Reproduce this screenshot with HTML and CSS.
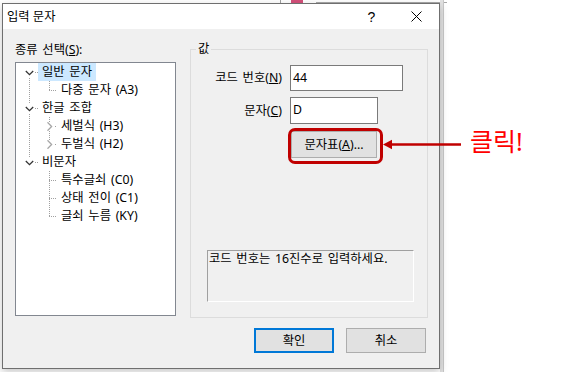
FILE: index.html
```html
<!DOCTYPE html>
<html lang="ko">
<head>
<meta charset="utf-8">
<title>입력 문자</title>
<link rel="stylesheet" href="styles.css">
</head>
<body>
<div class="desk">
  <div class="bg-line-v"></div>
  <div class="bg-pink"></div>
  <div class="bg-window"></div>
  <div class="bg-strip"></div>

  <div class="dialog">
    <div class="titlebar">
      <span class="title">입력 문자</span>
      <span class="tb-btn help">?</span>
      <span class="tb-btn close">
        <svg width="11" height="11" viewBox="0 0 11 11"><path d="M0.5 0.5 L10.5 10.5 M10.5 0.5 L0.5 10.5" stroke="#000" stroke-width="1" fill="none"/></svg>
      </span>
    </div>
    <div class="body">
      <div class="left">
        <div class="lbl">종류 선택(<u>S</u>):</div>
        <div class="tree">
          <svg class="tree-lines" width="159" height="252" viewBox="0 0 159 252">
            <g stroke="#a0a0a0" stroke-width="1" stroke-dasharray="1 1" fill="none">
              <path d="M13.5 9 V99"/>
              <path d="M13 9.5 H22 M13 45.5 H22 M13 99.5 H22"/>
              <path d="M33.5 18 V27 M33.5 54 V81 M33.5 108 V153"/>
              <path d="M33 27.5 H41 M33 63.5 H41 M33 81.5 H41 M33 117.5 H41 M33 135.5 H41 M33 153.5 H41"/>
            </g>
          </svg>
          <div class="row l0 sel"><span class="exp"><svg width="9" height="9" viewBox="0 0 9 9"><path d="M0.8 3 L4.5 6.6 L8.2 3" stroke="#333" stroke-width="1.3" fill="none"/></svg></span><span class="txt">일반 문자</span></div>
          <div class="row l1"><span class="gap"></span><span class="txt">다중 문자 (A3)</span></div>
          <div class="row l0"><span class="exp"><svg width="9" height="9" viewBox="0 0 9 9"><path d="M0.8 3 L4.5 6.6 L8.2 3" stroke="#333" stroke-width="1.3" fill="none"/></svg></span><span class="txt">한글 조합</span></div>
          <div class="row l1"><span class="exp"><svg width="9" height="9" viewBox="0 0 9 9"><path d="M2.5 0.3 L6.6 4.5 L2.5 8.7" stroke="#a6a6a6" stroke-width="1.3" fill="none"/></svg></span><span class="txt">세벌식 (H3)</span></div>
          <div class="row l1"><span class="exp"><svg width="9" height="9" viewBox="0 0 9 9"><path d="M2.5 0.3 L6.6 4.5 L2.5 8.7" stroke="#a6a6a6" stroke-width="1.3" fill="none"/></svg></span><span class="txt">두벌식 (H2)</span></div>
          <div class="row l0"><span class="exp"><svg width="9" height="9" viewBox="0 0 9 9"><path d="M0.8 3 L4.5 6.6 L8.2 3" stroke="#333" stroke-width="1.3" fill="none"/></svg></span><span class="txt">비문자</span></div>
          <div class="row l1"><span class="gap"></span><span class="txt">특수글쇠 (C0)</span></div>
          <div class="row l1"><span class="gap"></span><span class="txt">상태 전이 (C1)</span></div>
          <div class="row l1"><span class="gap"></span><span class="txt">글쇠 누름 (KY)</span></div>
        </div>
      </div>

      <div class="group">
        <span class="group-title">값</span>
        <div class="form">
          <label class="flabel">코드 번호(<u>N</u>)</label>
          <div class="input w1">44</div>
          <label class="flabel">문자(<u>C</u>)</label>
          <div class="input w2">D</div>
          <button class="btn charmap">문자표(<u>A</u>)...</button>
        </div>
        <div class="desc">코드 번호는 16진수로 입력하세요.</div>
      </div>

      <div class="actions">
        <button class="btn act ok">확인</button>
        <button class="btn act">취소</button>
      </div>
    </div>
  </div>

  <div class="callout-box"></div>
  <svg class="callout-arrow" width="84" height="16" viewBox="0 0 84 16">
    <path d="M9 8.5 H80" stroke="#c00000" stroke-width="2.6" fill="none"/>
    <path d="M2 8.5 L11 3.8 L11 13.2 Z" fill="#c00000"/>
  </svg>
  <div class="callout-text">클릭!</div>
</div>
</body>
</html>
```

FILE: styles.css
```css
html, body {
  margin: 0;
  padding: 0;
}

body {
  width: 563px;
  height: 372px;
  overflow: hidden;
  background: #ffffff;
  font-family: "Noto Sans", "Noto Sans CJK KR", sans-serif;
  font-size: 12.3px;
  word-spacing: 1.5px;
  color: #000;
}

.desk {
  position: relative;
  width: 563px;
  height: 372px;
}

/* windows behind the dialog */
.bg-line-v {
  position: absolute;
  left: 280px;
  top: 0;
  width: 1px;
  height: 4px;
  background: #a0a0a0;
}

.bg-pink {
  position: absolute;
  left: 291px;
  top: 0;
  width: 12px;
  height: 3px;
  background: #d4507a;
}

.bg-window {
  position: absolute;
  left: 316px;
  top: 2px;
  width: 130px;
  height: 6px;
  border-top: 1px solid #a8a8a8;
  border-left: 1px solid #a8a8a8;
}

.bg-strip {
  position: absolute;
  left: 440px;
  top: 0;
  width: 3px;
  height: 372px;
  background: #e2e2e2;
  border-right: 1px solid #c8c8c8;
}

.dialog {
  position: absolute;
  left: 2px;
  top: 3px;
  width: 438px;
  height: 366px;
  box-sizing: border-box;
  border: 1px solid #6f6f6f;
  background: #f0f0f0;
  box-shadow: 0 3px 8px rgba(0, 0, 0, 0.22);
  display: flex;
  flex-direction: column;
}

.titlebar {
  height: 25px;
  flex: none;
  background: #ffffff;
  display: flex;
  align-items: center;
}

.title {
  flex: 1;
  padding-left: 4px;
  line-height: 16px;
  word-spacing: 0;
}

.tb-btn {
  width: 45px;
  height: 25px;
  display: flex;
  align-items: center;
  justify-content: center;
}

.help {
  font-family: "Liberation Sans", sans-serif;
  font-size: 14px;
}

.body {
  display: grid;
  grid-template-columns: 161px 238px;
  column-gap: 14px;
  align-content: start;
  padding: 13px 0 0 12px;
}

.left {
  display: flex;
  flex-direction: column;
}

.lbl {
  line-height: 16px;
  height: 16px;
}

.tree {
  margin-top: 4px;
  height: 254px;
  box-sizing: border-box;
  border: 1px solid #828790;
  background: #ffffff;
  position: relative;
}

.tree-lines {
  position: absolute;
  left: 0;
  top: 0;
}

.row {
  position: relative;
  height: 18px;
  display: flex;
  align-items: center;
}

.l0 {
  padding-left: 9px;
}

.l1 {
  padding-left: 29px;
}

.exp, .gap {
  width: 9px;
  height: 9px;
  flex: none;
  display: block;
}

.exp {
  background: #ffffff;
}

.exp svg {
  display: block;
}

.txt {
  padding: 0 4px;
  line-height: 18px;
  height: 18px;
  white-space: nowrap;
}

.l0 .txt {
  margin-left: 4px;
}

.l1 .txt {
  margin-left: 3px;
}

.sel .txt {
  background: #cce8ff;
}

.group {
  position: relative;
  margin-top: 7px;
  height: 269px;
  box-sizing: border-box;
  border: 1px solid #dcdcdc;
  padding-top: 15px;
}

.group-title {
  position: absolute;
  left: 5px;
  top: -9px;
  padding: 0 2px;
  background: #f0f0f0;
  line-height: 16px;
}

.form {
  display: grid;
  grid-template-columns: 91px auto;
  column-gap: 8px;
  row-gap: 6px;
  align-items: center;
  justify-items: start;
}

.flabel {
  justify-self: end;
  line-height: 16px;
  white-space: nowrap;
}

.input {
  height: 26px;
  box-sizing: border-box;
  border: 1px solid #7a7a7a;
  background: #ffffff;
  padding-left: 2px;
  line-height: 24px;
}

.w1 {
  width: 113px;
}

.w2 {
  width: 88px;
  height: 27px;
}

.btn {
  font: inherit;
  word-spacing: inherit;
  color: #000;
  background: #e1e1e1;
  border: 1px solid #adadad;
  padding: 0;
  margin: 0;
  box-sizing: border-box;
  line-height: 16px;
  white-space: nowrap;
}

.charmap {
  grid-column: 2;
  width: 86px;
  height: 27px;
  margin: 1px 0 0 1px;
}

.desc {
  margin: 92px 0 0 16px;
  width: 207px;
  height: 52px;
  box-sizing: border-box;
  border: 1px solid;
  border-color: #a0a0a0 #ffffff #ffffff #a0a0a0;
  padding-left: 1px;
  line-height: 16px;
  white-space: nowrap;
}

.actions {
  grid-column: 1 / -1;
  display: flex;
  justify-content: flex-end;
  gap: 12px;
  margin-top: 10px;
  padding-right: 2px;
}

.act {
  width: 80px;
  height: 25px;
}

.ok {
  border: 2px solid #0078d7;
}

/* annotation overlay */
.callout-box {
  position: absolute;
  left: 288px;
  top: 128px;
  width: 95px;
  height: 36px;
  box-sizing: border-box;
  border: 3px solid #c00000;
  border-radius: 7px;
}

.callout-arrow {
  position: absolute;
  left: 381px;
  top: 136px;
}

.callout-text {
  position: absolute;
  left: 470px;
  top: 126px;
  font-size: 25px;
  line-height: 30px;
  word-spacing: 0;
  color: #ff0000;
  white-space: nowrap;
}
```
